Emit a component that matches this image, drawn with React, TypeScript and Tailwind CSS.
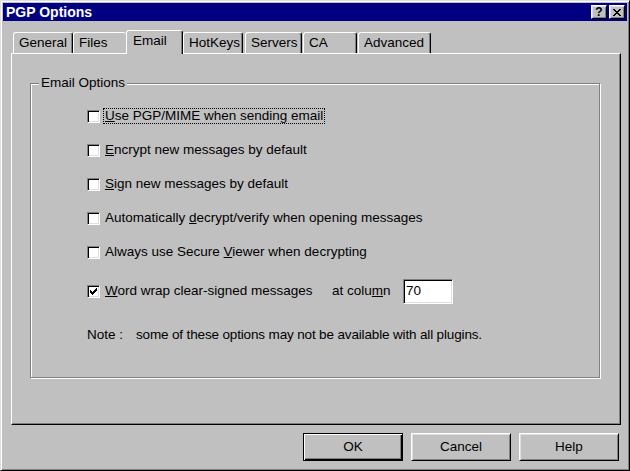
import type { ReactNode } from "react";

const font = "font-['Liberation_Sans',Arial,sans-serif]";

function Tick() {
  return (
    <svg width="7" height="7" viewBox="0 0 7 7" shapeRendering="crispEdges">
      <path
        d="M0 2h1v3h-1zM1 3h1v3h-1zM2 4h1v3h-1zM3 3h1v3h-1zM4 2h1v3h-1zM5 1h1v3h-1zM6 0h1v3h-1z"
        fill="#000"
      />
    </svg>
  );
}

function CheckBox({ checked }: { checked?: boolean }) {
  return (
    <span className="flex h-[13px] w-[13px] shrink-0 items-center justify-center border border-t-[#808080] border-l-[#808080] border-r-white border-b-white bg-white shadow-[inset_1px_1px_0_#000,inset_-1px_-1px_0_#dfdfdf]">
      {checked && <Tick />}
    </span>
  );
}

function Option({
  label,
  checked,
  focus,
  children,
  className = "",
}: {
  label: ReactNode;
  checked?: boolean;
  focus?: boolean;
  children?: ReactNode;
  className?: string;
}) {
  return (
    <div className={`flex h-[34px] items-center ${className}`}>
      <CheckBox checked={checked} />
      <span
        className={`ml-[3px] border px-[1px] leading-[14px] ${
          focus ? "border-dotted border-black" : "border-transparent"
        }`}
      >
        {label}
      </span>
      {children}
    </div>
  );
}

function Tab({
  label,
  width,
  selected,
  noRight,
  className = "",
}: {
  label: string;
  width: number;
  selected?: boolean;
  noRight?: boolean;
  className?: string;
}) {
  return (
    <div
      style={{ width }}
      className={`flex items-center rounded-t-[3px] border-t border-l border-t-white border-l-white bg-[#c0c0c0] ${
        noRight ? "" : "border-r border-r-black shadow-[inset_-1px_0_0_#808080]"
      } ${
        selected
          ? "relative z-10 -mb-px h-[24px] pb-[2px] pl-[6px]"
          : "h-[21px] pl-[5px]"
      } ${className}`}
    >
      {label}
    </div>
  );
}

function Button({ label, primary }: { label: string; primary?: boolean }) {
  return (
    <div
      className={`flex h-[28px] w-[100px] items-center justify-center border ${
        primary
          ? "border-black shadow-[inset_1px_1px_0_#fff,inset_-1px_-1px_0_#000,inset_-2px_-2px_0_#808080]"
          : "border-t-white border-l-white border-r-black border-b-black shadow-[inset_1px_1px_0_#dfdfdf,inset_-1px_-1px_0_#808080]"
      }`}
    >
      {label}
    </div>
  );
}

function CaptionButton({ children }: { children: ReactNode }) {
  return (
    <div className="flex h-[14px] w-[16px] items-center justify-center border border-t-white border-l-white border-r-black border-b-black bg-[#c0c0c0] text-black shadow-[inset_1px_1px_0_#dfdfdf,inset_-1px_-1px_0_#808080]">
      {children}
    </div>
  );
}

export default function App() {
  return (
    <div
      className={`${font} h-[471px] w-[630px] overflow-hidden border border-t-[#dfdfdf] border-l-[#dfdfdf] border-r-black border-b-black bg-[#c0c0c0] p-[2px] text-[13.5px] text-black shadow-[inset_1px_1px_0_#fff,inset_-1px_-1px_0_#808080]`}
    >
      <div className="flex h-[18px] items-center bg-[#000080] pl-[3px] pr-[2px]">
        <span className="text-[14px] font-bold text-white">PGP Options</span>
        <div className="ml-auto flex gap-[2px]">
          <CaptionButton>
            <span className="text-[12px] leading-none font-bold">?</span>
          </CaptionButton>
          <CaptionButton>
            <svg width="8" height="7" viewBox="0 0 8 7" shapeRendering="crispEdges">
              <path
                d="M0 0h2v1h-2zM6 0h2v1h-2zM1 1h2v1h-2zM5 1h2v1h-2zM2 2h4v1h-4zM3 3h2v1h-2zM2 4h4v1h-4zM1 5h2v1h-2zM5 5h2v1h-2zM0 6h2v1h-2zM6 6h2v1h-2z"
                fill="#000"
              />
            </svg>
          </CaptionButton>
        </div>
      </div>

      <div className="pl-[8px] pt-[9px]">
        <div className="ml-[2px] flex h-[23px] items-end">
          <Tab label="General" width={60} />
          <Tab label="Files" width={53} noRight />
          <Tab label="Email" width={57} selected />
          <Tab label="HotKeys" width={60} />
          <Tab label="Servers" width={57} className="ml-[2px]" />
          <Tab label="CA" width={54} className="ml-[1px]" />
          <Tab label="Advanced" width={73} className="ml-[1px]" />
        </div>

        <div className="h-[372px] w-[610px] border border-t-white border-l-white border-r-black border-b-black pl-[18px] pt-[29px] shadow-[inset_-1px_-1px_0_#808080]">
          <div className="relative h-[295px] w-[570px] border border-[#808080] pl-[56px] pt-[15px] shadow-[inset_1px_1px_0_#fff,1px_1px_0_#fff]">
            <span className="absolute left-[8px] top-[-9px] bg-[#c0c0c0] px-[2px] leading-[16px]">
              Email Options
            </span>

            <Option
              focus
              label={
                <>
                  <u>U</u>se PGP/MIME when sending email
                </>
              }
            />
            <Option
              label={
                <>
                  <u>E</u>ncrypt new messages by default
                </>
              }
            />
            <Option
              label={
                <>
                  <u>S</u>ign new messages by default
                </>
              }
            />
            <Option
              label={
                <>
                  Automatically <u>d</u>ecrypt/verify when opening messages
                </>
              }
            />
            <Option
              label={
                <>
                  Always use Secure <u>V</u>iewer when decrypting
                </>
              }
            />
            <Option
              checked
              className="mt-[5px]"
              label={
                <span className="inline-block w-[225px]">
                  <u>W</u>ord wrap clear-signed messages
                </span>
              }
            >
              <span className="w-[71px]">
                at colu<u>m</u>n
              </span>
              <div className="h-[25px] w-[50px] border border-t-[#808080] border-l-[#808080] border-r-white border-b-white bg-white pl-[2px] pt-[3px] leading-[15px] shadow-[inset_1px_1px_0_#000,inset_-1px_-1px_0_#dfdfdf]">
                70
              </div>
            </Option>

            <div className="mt-[10px] flex h-[34px] items-center">
              <span className="w-[49px]">Note :</span>
              <span className="tracking-[-0.15px]">
                some of these options may not be available with all plugins.
              </span>
            </div>
          </div>
        </div>

        <div className="ml-[292px] mt-[8px] flex gap-[8px]">
          <Button label="OK" primary />
          <Button label="Cancel" />
          <Button label="Help" />
        </div>
      </div>
    </div>
  );
}
